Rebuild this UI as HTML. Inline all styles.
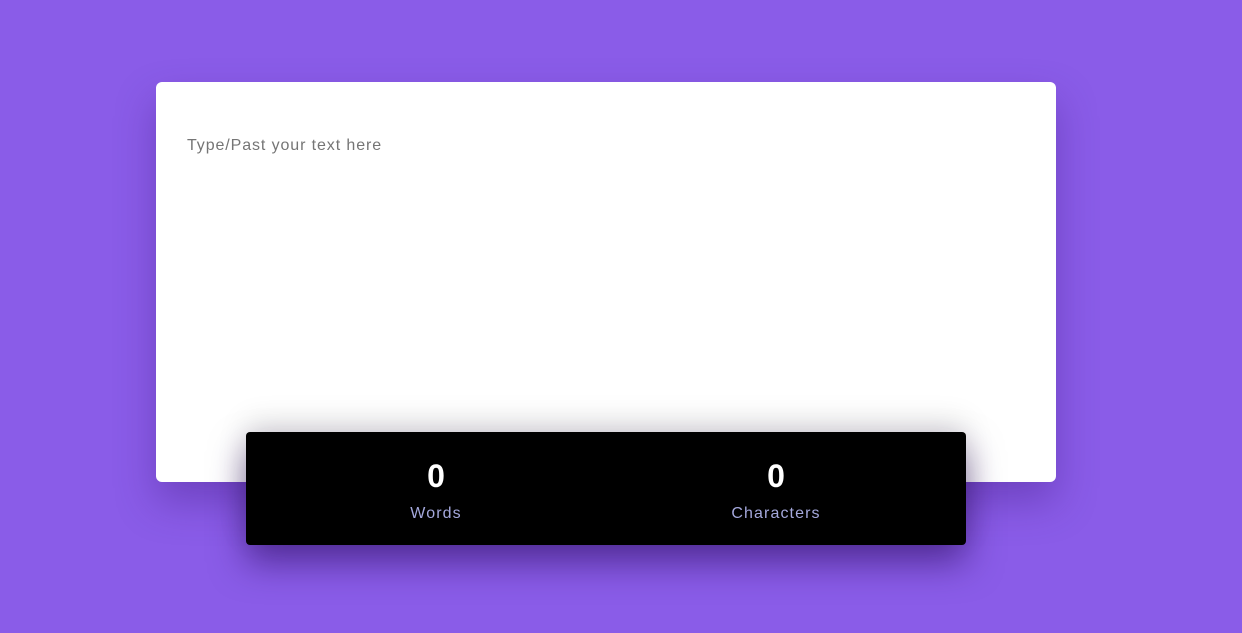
<!DOCTYPE html>
<html><head><style>
html,body{margin:0;padding:0;width:1242px;height:633px;background:#8a5ce8;overflow:hidden;font-family:"Liberation Sans",sans-serif}
.box{position:absolute;left:156px;top:82px;width:900px;height:400px;background:#fff;border-radius:6px;box-shadow:0 20px 40px rgba(60,20,120,0.35)}
.ph{position:absolute;left:31px;top:55px;font-size:16px;color:#757575;letter-spacing:0.9px}
.bar{position:absolute;left:246px;top:432px;width:720px;height:113px;background:#000;border-radius:4px;box-shadow:0 18px 35px rgba(40,10,90,0.55),0 -10px 30px rgba(0,0,0,0.12)}
.s{position:absolute;top:0;width:360px;text-align:center}
.n{position:absolute;top:26px;width:100%;font-size:32px;font-weight:bold;color:#fff}
.l{position:absolute;top:73px;width:100%;font-size:16px;color:#a4a8dc;letter-spacing:1.1px}
</style></head><body>
<div class="box"><div class="ph">Type/Past your text here</div></div>
<div class="bar">
<div class="s" style="left:10px"><div class="n">0</div><div class="l">Words</div></div>
<div class="s" style="left:350px"><div class="n">0</div><div class="l">Characters</div></div>
</div>
</body></html>
